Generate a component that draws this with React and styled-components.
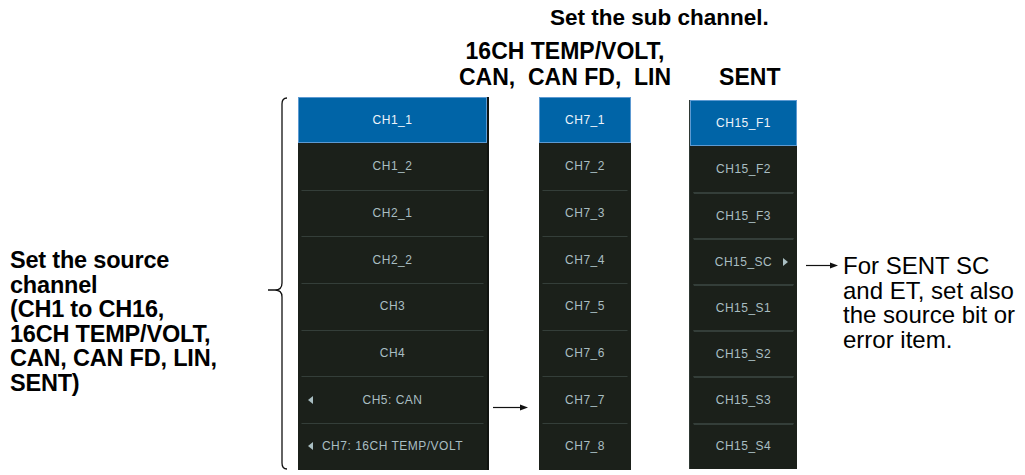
import React from 'react';
import styled, { createGlobalStyle } from 'styled-components';

const GlobalStyle = createGlobalStyle`
  html, body {
    margin: 0;
    padding: 0;
    background: #fff;
  }
  body {
    font-family: "Liberation Sans", Arial, sans-serif;
    color: #000;
  }
`;

const Page = styled.div`
  width: 1025px;
  height: 475px;
  overflow: hidden;
  padding-top: 4px;
  box-sizing: border-box;
`;

const Title = styled.div`
  padding-left: 550px;
  font-size: 22.5px;
  font-weight: bold;
  line-height: 28px;
`;

const HeadRow = styled.div`
  display: flex;
  align-items: flex-end;
  margin-top: 6px;
  font-size: 23px;
  font-weight: bold;
  line-height: 26px;
`;

const HeadGroup = styled.div`
  margin-left: ${(p) => p.$left}px;
  text-align: center;
  white-space: pre;
`;

const Body = styled.div`
  display: flex;
  align-items: flex-start;
  margin-top: 7px;
`;

const SourceLabel = styled.div`
  width: 255px;
  padding-left: 10px;
  padding-top: 151px;
  font-size: 23.5px;
  font-weight: bold;
  line-height: 24.6px;
  letter-spacing: -0.2px;
`;

const Brace = styled.svg`
  display: block;
  width: 25px;
  height: 373px;
  margin-right: 8px;
  flex: none;
`;

const Menu = styled.div`
  width: ${(p) => p.$width}px;
  margin-top: ${(p) => p.$top || 0}px;
  background: #1b201a;
  border-right: ${(p) => (p.$edge ? '2px solid #111410' : '0')};
  border-left: ${(p) => (p.$lit ? '1px solid #2e3833' : '0')};
  box-sizing: border-box;
  flex: none;
`;

const Item = styled.div`
  display: grid;
  grid-template-columns: 16px 1fr 16px;
  align-items: center;
  height: ${(p) => p.$h}px;
  box-sizing: border-box;
  font-size: 12px;
  letter-spacing: 0.5px;
  color: ${(p) => (p.$active ? '#eef4fa' : '#a9bec2')};
  background: ${(p) => (p.$active ? '#0064a7' : 'transparent')};
  border: ${(p) => (p.$active ? '1px solid #5d9ad2' : '1px solid transparent')};
  border-top: ${(p) =>
    p.$active ? '1px solid #5d9ad2' : p.$first ? '1px solid transparent' : `${p.$sep}px solid #343e39`};
  margin: ${(p) => (p.$active ? '0' : '0 3px')};
`;

const Label = styled.span`
  grid-column: 2;
  text-align: center;
  white-space: nowrap;
`;

const Tri = styled.span`
  justify-self: center;
  width: 0;
  height: 0;
  border-top: 4px solid transparent;
  border-bottom: 4px solid transparent;
  ${(p) =>
    p.$dir === 'left'
      ? 'border-right: 5px solid #a9bec2; grid-column: 1;'
      : 'border-left: 5px solid #a9bec2; grid-column: 3;'}
`;

const ArrowCell = styled.div`
  width: ${(p) => p.$width}px;
  padding-top: ${(p) => p.$top}px;
  padding-left: ${(p) => p.$left}px;
  box-sizing: border-box;
  flex: none;
`;

const Spacer = styled.div`
  width: ${(p) => p.$width}px;
  flex: none;
`;

const Note = styled.div`
  display: flex;
  align-items: flex-start;
  margin-top: 157px;
`;

const NoteText = styled.div`
  font-size: 24px;
  line-height: 24.5px;
  margin-left: 5px;
`;

const Arrow = ({ width = 36 }) => (
  <svg width={width} height="9" viewBox={`0 0 ${width} 9`} style={{ display: 'block' }}>
    <line x1="0" y1="4.5" x2={width - 6} y2="4.5" stroke="#111" strokeWidth="1.2" />
    <path d={`M${width - 8} 1.5 L${width} 4.5 L${width - 8} 7.5 Z`} fill="#111" />
  </svg>
);

const sourceItems = [
  { label: 'CH1_1', active: true },
  { label: 'CH1_2' },
  { label: 'CH2_1' },
  { label: 'CH2_2' },
  { label: 'CH3' },
  { label: 'CH4' },
  { label: 'CH5: CAN', left: true },
  { label: 'CH7: 16CH TEMP/VOLT', left: true },
];

const subItems = ['CH7_1', 'CH7_2', 'CH7_3', 'CH7_4', 'CH7_5', 'CH7_6', 'CH7_7', 'CH7_8'];

const sentItems = ['CH15_F1', 'CH15_F2', 'CH15_F3', 'CH15_SC', 'CH15_S1', 'CH15_S2', 'CH15_S3', 'CH15_S4'];

export default function App() {
  return (
    <Page>
      <GlobalStyle />
      <Title>Set the sub channel.</Title>
      <HeadRow>
        <HeadGroup $left={459}>{'16CH TEMP/VOLT,\nCAN,  CAN FD,  LIN'}</HeadGroup>
        <HeadGroup $left={48}>SENT</HeadGroup>
      </HeadRow>
      <Body>
        <SourceLabel>
          Set the source
          <br />
          channel
          <br />
          (CH1 to CH16,
          <br />
          16CH TEMP/VOLT,
          <br />
          CAN, CAN FD, LIN,
          <br />
          SENT)
        </SourceLabel>
        <Brace viewBox="0 0 25 373">
          <path
            d="M22 1 Q17 1 17 7 L17 186 Q17 193 10 193 L3 193 M10 193 Q17 193 17 200 L17 366 Q17 372 22 372"
            fill="none"
            stroke="#111"
            strokeWidth="1.3"
          />
        </Brace>
        <Menu $width={191} $edge>
          {sourceItems.map((it, i) => (
            <Item key={it.label} $h={i === 0 ? 46 : 46.7} $active={it.active} $first={i === 1} $sep={1}>
              {it.left && <Tri $dir="left" />}
              <Label>{it.label}</Label>
            </Item>
          ))}
        </Menu>
        <ArrowCell $width={50} $top={306} $left={4}>
          <Arrow width={35} />
        </ArrowCell>
        <Menu $width={92}>
          {subItems.map((l, i) => (
            <Item key={l} $h={i === 0 ? 46 : 46.7} $active={i === 0} $first={i === 1} $sep={1}>
              <Label>{l}</Label>
            </Item>
          ))}
        </Menu>
        <Spacer $width={58} />
        <Menu $width={108} $top={3} $lit>
          {sentItems.map((l, i) => (
            <Item key={l} $h={i === 0 ? 46 : 46.1} $active={i === 0} $first={i === 1} $sep={2}>
              <Label>{l}</Label>
              {l === 'CH15_SC' && <Tri $dir="right" />}
            </Item>
          ))}
        </Menu>
        <Note>
          <ArrowCell $width={41} $top={7} $left={9}>
            <Arrow width={32} />
          </ArrowCell>
          <NoteText>
            For SENT SC
            <br />
            and ET, set also
            <br />
            the source bit or
            <br />
            error item.
          </NoteText>
        </Note>
      </Body>
    </Page>
  );
}
